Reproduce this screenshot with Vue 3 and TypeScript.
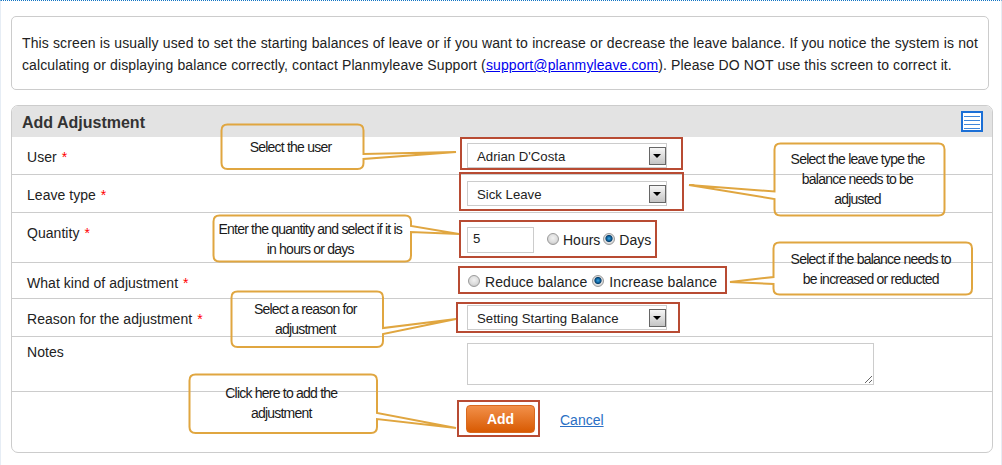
<script setup lang="ts">
interface Callout {
  x: number; y: number; w: number; h: number;
  side: 'left' | 'right';
  y1: number; y2: number; tipX: number; tipY: number;
  textTop: number; lines: string[];
}
interface Mark { x: number; y: number; w: number; h: number }

const callouts: Callout[] = [
  { x: 221.5, y: 124.5, w: 142, h: 44.5, side: 'right', y1: 154, y2: 159, tipX: 456, tipY: 152, textTop: 137, lines: ['Select the user'] },
  { x: 774.5, y: 143.5, w: 170, h: 72, side: 'left', y1: 191.5, y2: 199, tipX: 689, tipY: 185, textTop: 149, lines: ['Select the leave type the', 'balance needs to be', 'adjusted'] },
  { x: 213.5, y: 215.5, w: 197.5, h: 46, side: 'right', y1: 226, y2: 232, tipX: 459, tipY: 234, textTop: 219, lines: ['Enter the quantity and select if it is', 'in hours or days'] },
  { x: 773.5, y: 242.5, w: 198.5, h: 52, side: 'left', y1: 277, y2: 284, tipX: 730, tipY: 282, textTop: 249, lines: ['Select if the balance needs to', 'be increased or reducted'] },
  { x: 231.5, y: 291.5, w: 151.5, h: 55.5, side: 'right', y1: 328, y2: 334, tipX: 456, tipY: 319, textTop: 299, lines: ['Select a reason for', 'adjustment'] },
  { x: 189.5, y: 374.5, w: 187.5, h: 58.5, side: 'right', y1: 413, y2: 419, tipX: 456, tipY: 428, textTop: 383, lines: ['Click here to add the', 'adjustment'] },
];

const marks: Mark[] = [
  { x: 460, y: 137, w: 223, h: 33 },
  { x: 459, y: 172, w: 225, h: 39 },
  { x: 459, y: 220, w: 198, h: 38 },
  { x: 458, y: 266, w: 269, h: 28 },
  { x: 456, y: 302, w: 224, h: 31 },
  { x: 457, y: 400, w: 83, h: 37 },
];

function calloutPath(c: Callout): string {
  const r = 6;
  const x2 = c.x + c.w;
  const y2 = c.y + c.h;
  const right = c.side === 'right' ? `V${c.y1} L${c.tipX} ${c.tipY} L${x2} ${c.y2} ` : '';
  const left = c.side === 'left' ? `V${c.y2} L${c.tipX} ${c.tipY} L${c.x} ${c.y1} ` : '';
  return `M${c.x + r} ${c.y} H${x2 - r} Q${x2} ${c.y} ${x2} ${c.y + r} ${right}V${y2 - r} Q${x2} ${y2} ${x2 - r} ${y2} H${c.x + r} Q${c.x} ${y2} ${c.x} ${y2 - r} ${left}V${c.y + r} Q${c.x} ${c.y} ${c.x + r} ${c.y} Z`;
}
</script>

<template>
  <div class="page">
    <div class="notice">
      This screen is usually used to set the starting balances of leave or if you want to increase or decrease the leave balance. If you notice the system is not calculating or displaying balance correctly, contact Planmyleave Support (<a class="mail" href="#">support@planmyleave.com</a>). Please DO NOT use this screen to correct it.
    </div>

    <section class="panel">
      <header class="panel-head">
        <h2>Add Adjustment</h2>
        <svg class="list-icon" width="22" height="21" viewBox="0 0 22 21">
          <rect x="1" y="1" width="20" height="19" fill="#fff" stroke="#1b6fd6" stroke-width="2" />
          <path d="M3 5.5H19M3 9.5H19M3 13.5H19M3 17.5H19" stroke="#3f86da" stroke-width="1" />
        </svg>
      </header>

      <div class="row r1">
        <label class="lbl">User <i>*</i></label>
        <div class="ctl"><div class="sel"><span>Adrian D'Costa</span><b class="arrow"></b></div></div>
      </div>
      <div class="row r2">
        <label class="lbl">Leave type <i>*</i></label>
        <div class="ctl"><div class="sel"><span>Sick Leave</span><b class="arrow"></b></div></div>
      </div>
      <div class="row r3">
        <label class="lbl">Quantity <i>*</i></label>
        <div class="ctl qty">
          <input class="num" type="text" value="5" />
          <span class="radio"></span><span class="opt">Hours</span>
          <span class="radio on"></span><span class="opt">Days</span>
        </div>
      </div>
      <div class="row r4">
        <label class="lbl">What kind of adjustment <i>*</i></label>
        <div class="ctl kind">
          <span class="radio"></span><span class="opt">Reduce balance</span>
          <span class="radio on"></span><span class="opt">Increase balance</span>
        </div>
      </div>
      <div class="row r5">
        <label class="lbl">Reason for the adjustment <i>*</i></label>
        <div class="ctl"><div class="sel"><span>Setting Starting Balance</span><b class="arrow"></b></div></div>
      </div>
      <div class="row r6">
        <label class="lbl">Notes</label>
        <div class="ctl"><textarea class="notes"></textarea></div>
      </div>
      <div class="actions">
        <button class="add" type="button">Add</button>
        <a class="cancel" href="#">Cancel</a>
      </div>
    </section>

    <svg class="overlay" width="1002" height="465" viewBox="0 0 1002 465">
      <rect v-for="(m, i) in marks" :key="'m' + i" :x="m.x + 1" :y="m.y + 1" :width="m.w - 2" :height="m.h - 2" fill="none" stroke="#b84b33" stroke-width="2" />
      <path v-for="(c, i) in callouts" :key="'c' + i" :d="calloutPath(c)" fill="none" stroke="#e0a640" stroke-width="2" />
    </svg>
    <div
      v-for="(c, i) in callouts"
      :key="'t' + i"
      class="note"
      :style="{ left: c.x + 'px', top: c.textTop + 'px', width: c.w + 'px' }"
    >
      <div v-for="(l, j) in c.lines" :key="j">{{ l }}</div>
    </div>
  </div>
</template>

<style scoped>
.page {
  position: relative;
  box-sizing: border-box;
  width: 1002px;
  height: 465px;
  overflow: hidden;
  background: #fff;
  border-top: 1px dotted #1275c4;
  border-left: 1px solid #e6edf5;
  border-right: 1px solid #e6edf5;
  padding: 15px 0 0 10px;
  font-family: "Liberation Sans", Arial, sans-serif;
  font-size: 14px;
  color: #222;
}
.notice {
  box-sizing: border-box;
  width: 978px;
  height: 74px;
  padding: 15px 10px 0;
  border: 1px solid #ccc;
  border-radius: 5px;
  line-height: 22px;
  letter-spacing: 0.11px;
  text-align: justify;
}
.mail { color: #0000ee; text-decoration: underline; }
.panel {
  box-sizing: border-box;
  width: 982px;
  height: 348px;
  margin-top: 15px;
  border: 1px solid #ccc;
  border-radius: 7px;
  overflow: hidden;
}
.panel-head {
  display: flex;
  align-items: center;
  justify-content: space-between;
  height: 31px;
  padding: 0 9px 0 10px;
  background: #e3e3e3;
}
.panel-head h2 { margin: 2px 0 0; font-size: 16px; font-weight: 700; color: #333; }
.list-icon { display: block; }
.row {
  box-sizing: border-box;
  display: grid;
  grid-template-columns: 455px 1fr;
  border-bottom: 1px solid #ccc;
}
.lbl { padding: 12px 0 0 15px; line-height: 17px; letter-spacing: 0.04px; }
.lbl i { font-style: normal; color: #f00; margin-left: 1px; }
.ctl { padding-top: 6px; }
.r1, .r2, .r5 { height: 38px; }
.r3 { height: 50px; }
.r4 { height: 36px; }
.r6 { height: 55px; }
.r6 .lbl { padding-top: 7px; }
.qty { display: flex; align-items: center; height: 26px; padding-top: 14px; }
.kind { display: flex; align-items: center; height: 17px; padding: 10px 0 0 1px; letter-spacing: 0.08px; }
.sel {
  box-sizing: border-box;
  position: relative;
  display: flex;
  align-items: center;
  width: 200px;
  height: 25px;
  padding: 2px 0 0 9px;
  border: 1px solid #ccc;
  font-size: 13.2px;
}
.arrow {
  position: absolute;
  right: 0;
  top: 3px;
  box-sizing: border-box;
  width: 17px;
  height: 18px;
  border: 1px solid #666;
  background: linear-gradient(#f6f6f6, #c4c4c4);
}
.arrow::after {
  content: "";
  position: absolute;
  left: 3px;
  top: 6px;
  border: 4.5px solid transparent;
  border-top: 4px solid #000;
  border-bottom: 0;
}
.num {
  box-sizing: border-box;
  width: 67px;
  height: 26px;
  padding: 0 0 3px 5px;
  margin: 0 13px 0 0;
  border: 1px solid #ccc;
  outline: none;
  font: 13.2px "Liberation Sans", Arial, sans-serif;
  color: #222;
}
.radio {
  box-sizing: border-box;
  flex: none;
  width: 12px;
  height: 12px;
  margin-top: -2px;
  border-radius: 50%;
  border: 1px solid #9a9a9a;
  background: radial-gradient(circle at 50% 40%, #f2f2f2 0, #dcdcdc 55%, #b4b4b4 100%);
}
.radio.on {
  background: radial-gradient(circle at 50% 45%, #3fa6e0 0, #0a5f9c 30%, #0a3f6a 42%, #e4e4e4 55%, #bcbcbc 100%);
}
.opt { margin: 0 3px 0 4px; }
.kind .opt { margin: 0 5px 0 5px; }
.notes {
  display: block;
  box-sizing: border-box;
  width: 407px;
  height: 42px;
  margin: 0;
  border: 1px solid #ccc;
  outline: none;
}
.actions {
  display: flex;
  align-items: flex-start;
  padding: 13px 0 0 454px;
}
.add {
  box-sizing: border-box;
  width: 69px;
  height: 28px;
  padding-top: 1px;
  border: 1px solid #d9691e;
  border-radius: 4px;
  background: linear-gradient(#f2904a, #d85a02);
  color: #fff;
  font: 700 14px "Liberation Sans", Arial, sans-serif;
}
.cancel {
  margin: 7px 0 0 25px;
  color: #2a6fc4;
  text-decoration: underline;
}
.overlay { position: absolute; left: -1px; top: -1px; pointer-events: none; }
.note {
  position: absolute;
  margin: -1px 0 0 -3px;
  text-align: center;
  line-height: 20px;
  letter-spacing: -0.78px;
  color: #1a1a1a;
}
</style>
